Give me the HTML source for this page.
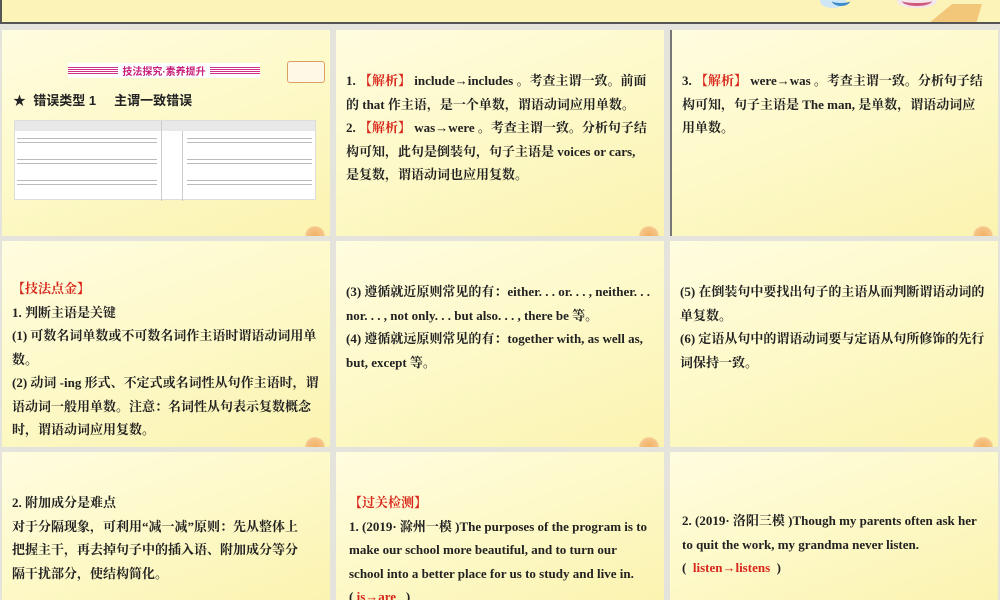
<!DOCTYPE html>
<html><head><meta charset="utf-8"><style>
*{margin:0;padding:0;box-sizing:border-box}
body{width:1000px;height:600px;overflow:hidden;background:#e4e4dc;position:relative;font-family:"Liberation Serif","Noto Serif CJK SC",serif;color:#222}
.p{position:absolute;background:linear-gradient(160deg,#fffde0 0%,#fdf9c8 50%,#fbf3b0 100%);overflow:hidden}
.t{position:absolute;font-size:13px;font-weight:bold;line-height:23.5px}
.r{color:#d8261c}
.leaf{position:absolute;right:4px;bottom:0;width:22px;height:10px;background:radial-gradient(circle at 50% 100%,#f2b060 0,#f5c58a 60%,transparent 70%)}
.cn{font-family:"Liberation Sans","Noto Sans CJK SC",sans-serif;font-weight:bold}
</style></head><body>
<div class="p" style="left:0;top:0;width:1000px;height:24px;border-bottom:2px solid #555;border-left:2px solid #555;background:#fbf3b8">
<div style="position:absolute;left:818px;top:-6px;width:26px;height:14px;border-radius:50%;background:#cfe6f5"></div>
<div style="position:absolute;left:830px;top:-4px;width:18px;height:10px;border-radius:50%;border-bottom:3px solid #3a8ccc"></div>
<div style="position:absolute;left:895px;top:-6px;width:40px;height:14px;border-radius:50%;background:#f3e6ec"></div>
<div style="position:absolute;left:900px;top:-4px;width:30px;height:10px;border-radius:50%;border-bottom:3px solid #d05a7a"></div>
<div style="position:absolute;left:920px;top:4px;width:60px;height:20px;background:#f2c77a;clip-path:polygon(10% 100%,50% 0,100% 0,90% 100%)"></div>
</div>

<div class="p" style="left:2px;top:30px;width:328px;height:206px">
<div style="position:absolute;left:66px;top:33px;width:192px;height:15px;background:#fff;display:flex;align-items:center;justify-content:center">
<div style="width:50px;height:8px;background:repeating-linear-gradient(#d0308a 0 1px,#fff 1px 2px)"></div>
<span class="cn" style="font-size:10px;color:#c8207a;margin:0 4px">技法探究·素养提升</span>
<div style="width:50px;height:8px;background:repeating-linear-gradient(#d0308a 0 1px,#fff 1px 2px)"></div></div>
<div style="position:absolute;left:285px;top:31px;width:38px;height:22px;border:1px solid #d8a060;border-radius:3px;background:#fff8e6"></div>
<div class="cn" style="position:absolute;left:11px;top:60px;font-size:13px">★&nbsp; 错误类型 1&nbsp;&nbsp;&nbsp;&nbsp; 主谓一致错误</div>
<div style="position:absolute;left:12px;top:90px;width:302px;height:80px;background:#fff;border:1px solid #ddd">
<div style="height:10px;background:#e8e8e8"></div>
<div style="position:absolute;left:146px;top:0;width:1px;height:80px;background:#ccc"></div>
<div style="position:absolute;left:167px;top:10px;width:1px;height:70px;background:#ccc"></div>
<div style="position:absolute;left:2px;top:14px;width:140px;height:64px;background:repeating-linear-gradient(#fff 0 3px,#bbb 3px 4px,#fff 4px 7px,#bbb 7px 8px,#fff 8px 21px)"></div>
<div style="position:absolute;left:172px;top:14px;width:125px;height:64px;background:repeating-linear-gradient(#fff 0 3px,#bbb 3px 4px,#fff 4px 7px,#bbb 7px 8px,#fff 8px 21px)"></div>
</div>
<div class="leaf"></div></div>

<div class="p" style="left:336px;top:30px;width:328px;height:206px">
<div class="t" style="left:10px;top:39px;width:302px"><span>1. </span><span class="r">【解析】</span> include→includes 。考查主谓一致。前面的 that 作主语，是一个单数，谓语动词应用单数。<br>2. <span class="r">【解析】</span> was→were 。考查主谓一致。分析句子结构可知，此句是倒装句，句子主语是 voices or cars, 是复数，谓语动词也应用复数。</div>
<div class="leaf"></div></div>

<div class="p" style="left:670px;top:30px;width:328px;height:206px;border-left:2px solid #777">
<div class="t" style="left:10px;top:39px;width:302px">3. <span class="r">【解析】</span> were→was 。考查主谓一致。分析句子结构可知，句子主语是 The man, 是单数，谓语动词应用单数。</div>
<div class="leaf"></div></div>

<div class="p" style="left:2px;top:241px;width:328px;height:206px">
<div class="t" style="left:10px;top:36px;width:308px"><span class="r">【技法点金】</span><br>1. 判断主语是关键<br>(1) 可数名词单数或不可数名词作主语时谓语动词用单数。<br>(2) 动词 -ing 形式、不定式或名词性从句作主语时，谓语动词一般用单数。注意：名词性从句表示复数概念时，谓语动词应用复数。</div>
<div class="leaf"></div></div>

<div class="p" style="left:336px;top:241px;width:328px;height:206px">
<div class="t" style="left:10px;top:39px;width:308px">(3) 遵循就近原则常见的有：either. . . or. . . , neither. . . nor. . . , not only. . . but also. . . , there be 等。<br>(4) 遵循就远原则常见的有：together with, as well as, but, except 等。</div>
<div class="leaf"></div></div>

<div class="p" style="left:670px;top:241px;width:328px;height:206px">
<div class="t" style="left:10px;top:39px;width:305px">(5) 在倒装句中要找出句子的主语从而判断谓语动词的单复数。<br>(6) 定语从句中的谓语动词要与定语从句所修饰的先行词保持一致。</div>
<div class="leaf"></div></div>

<div class="p" style="left:2px;top:452px;width:328px;height:148px">
<div class="t" style="left:10px;top:39px;width:290px">2. 附加成分是难点<br>对于分隔现象，可利用“减一减”原则：先从整体上把握主干，再去掉句子中的插入语、附加成分等分隔干扰部分，使结构简化。</div></div>

<div class="p" style="left:336px;top:452px;width:328px;height:148px">
<div class="t" style="left:13px;top:39px;width:305px"><span class="r">【过关检测】</span><br>1. (2019· 滁州一模 )The purposes of the program is to make our school more beautiful, and to turn our school into a better place for us to study and live in.<br>( <span class="r">is→are</span> &nbsp;&nbsp;)</div></div>

<div class="p" style="left:670px;top:452px;width:328px;height:148px">
<div class="t" style="left:12px;top:57px;width:298px">2. (2019· 洛阳三模 )Though my parents often ask her to quit the work, my grandma never listen.<br>( &nbsp;<span class="r">listen→listens</span> &nbsp;)</div></div>
</body></html>
